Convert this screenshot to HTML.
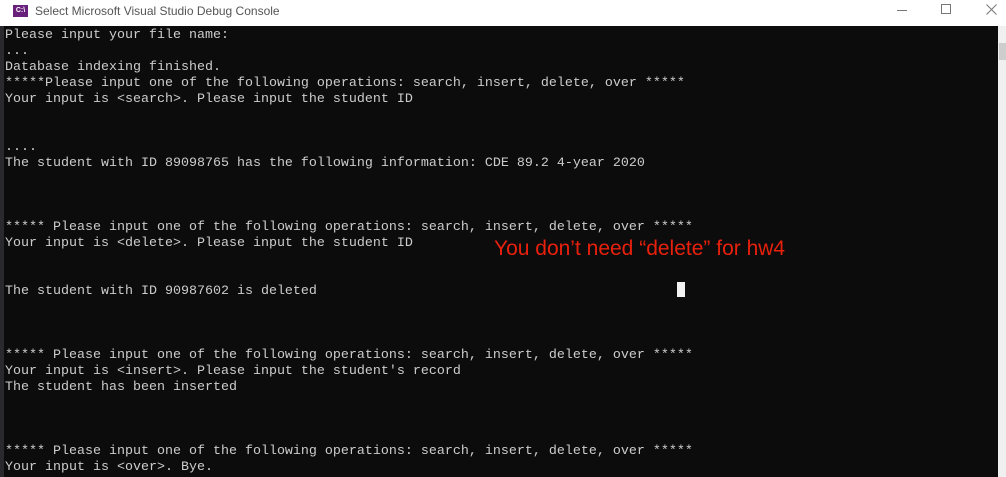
<!DOCTYPE html>
<html><head><style>
html,body{margin:0;padding:0;width:1006px;height:477px;overflow:hidden;background:#0c0c0c;}
#title{position:absolute;left:0;top:0;width:1006px;height:26px;background:#fff;}
#title .t{position:absolute;left:35px;top:4px;font:12px "Liberation Sans",sans-serif;color:#555;}
#icon{position:absolute;left:13px;top:5px;width:15px;height:12px;background:#68217a;color:#fff;font:bold 7px "Liberation Sans",sans-serif;line-height:12px;text-align:center;}
#strip{position:absolute;left:0;top:26px;width:4px;height:451px;background:#2a2a2e;}
#con{position:absolute;left:4px;top:26px;width:994px;height:451px;background:#0c0c0c;}
#sb{position:absolute;left:998px;top:26px;width:8px;height:451px;background:#f0f0f0;}
#thumb{position:absolute;left:999px;top:43px;width:7px;height:17px;background:#cdcdcd;}
pre{position:absolute;left:5px;top:28px;margin:0;font:13.33px/16px "Liberation Mono",monospace;color:#cccccc;}
#red{position:absolute;left:494px;top:237px;font:21px "Liberation Sans",sans-serif;color:#e8200c;white-space:nowrap;}
#cur{position:absolute;left:677px;top:282px;width:8px;height:15px;background:#f2f2f2;}
</style></head><body>
<div id="title"><div id="icon">C:\</div><div class="t">Select Microsoft Visual Studio Debug Console</div>
<div style="position:absolute;left:897px;top:10px;width:10px;height:1px;background:#777"></div>
<div style="position:absolute;left:941px;top:4px;width:8px;height:8px;border:1px solid #777"></div>
<svg style="position:absolute;left:986px;top:4px" width="11" height="11"><path d="M0.5 0.5L10.5 10.5M10.5 0.5L0.5 10.5" stroke="#777" stroke-width="1"/></svg>
</div>
<div id="strip"></div>
<div id="con"></div>
<div id="sb"></div><div id="thumb"></div>
<pre>Please input your file name:
...
Database indexing finished.
*****Please input one of the following operations: search, insert, delete, over *****
Your input is &lt;search&gt;. Please input the student ID


....
The student with ID 89098765 has the following information: CDE 89.2 4-year 2020



***** Please input one of the following operations: search, insert, delete, over *****
Your input is &lt;delete&gt;. Please input the student ID


The student with ID 90987602 is deleted



***** Please input one of the following operations: search, insert, delete, over *****
Your input is &lt;insert&gt;. Please input the student's record
The student has been inserted



***** Please input one of the following operations: search, insert, delete, over *****
Your input is &lt;over&gt;. Bye.</pre>
<div id="red">You don’t need “delete” for hw4</div>
<div id="cur"></div>
</body></html>
